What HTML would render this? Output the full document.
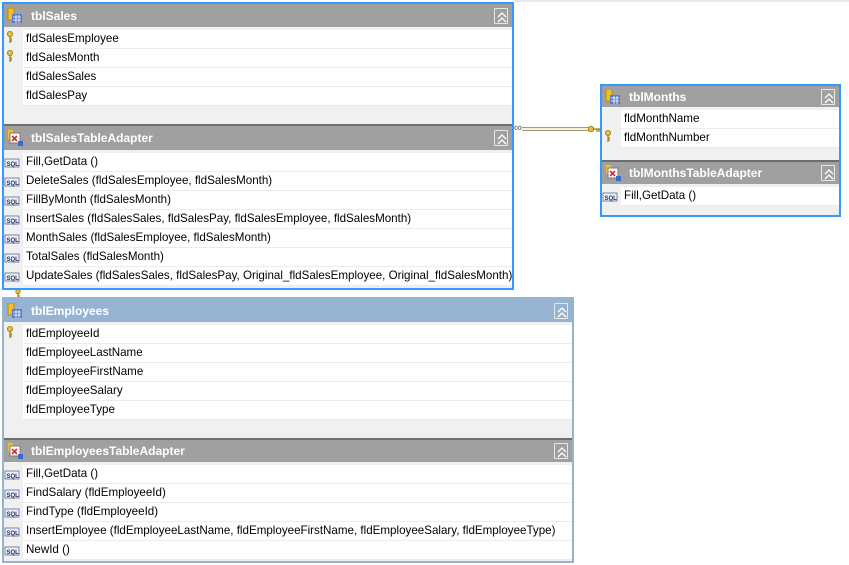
<!DOCTYPE html>
<html><head><meta charset="utf-8"><style>
*{margin:0;padding:0;box-sizing:border-box}
body{width:849px;height:565px;background:#fff;position:relative;overflow:hidden;font-family:"Liberation Sans",Arial,sans-serif;font-size:11.6px;color:#000}
.box{position:absolute;border:2px solid #3399ff;background:#f0f0f0;overflow:hidden}
.box.emp{border-color:#97b3d2}
.hd{position:relative;background:#a0a0a0;color:#fff;font-weight:bold;font-size:12px}
.emp .hd.t{background:#97b3d2}
.hd span{position:absolute;left:27px;top:50%;transform:translateY(-50%)}
.hd svg.ic{position:absolute;left:3px;top:50%;margin-top:-8px}
.btn{position:absolute;right:4px;top:50%;margin-top:-8px;width:14px;height:16px;border:1px solid #e8e8e8;border-radius:1px}
.btn svg{position:absolute;left:2px;top:3px}
.div{height:2px;background:#6e6e6e}
.row{position:relative;height:19px;margin-left:19px;background:#fff;border-bottom:1px solid #ececec;line-height:18px;padding-left:3px;white-space:nowrap}
.row .k{position:absolute;left:-17px;top:1px}
.row .s{position:absolute;left:-19px;top:3px}
.pad{height:3px}
</style></head><body>
<div style="position:absolute;left:514px;top:0;width:335px;height:2px;background:#e6e8ec"></div>

<svg width="0" height="0" style="position:absolute">
<defs>
<g id="tbl"><rect x="1" y="0" width="6" height="12" fill="#f0c020" stroke="#b08010" stroke-width="0.8"/><rect x="5" y="6" width="10" height="9" fill="#5a7ad0"/><path d="M6 9h8M6 12h8M9 7v8M12 7v8" stroke="#fff" stroke-width="0.8"/></g>
<g id="adp"><rect x="1" y="0" width="5" height="9" fill="#f0c020"/><rect x="3" y="3" width="10" height="10" fill="#fff" stroke="#7a7a7a"/><path d="M5 6l5 5M10 6l-5 5" stroke="#d03030" stroke-width="1.6"/><rect x="11" y="11" width="5" height="5" fill="#3a6ad0"/></g>
<g id="key"><circle cx="4" cy="3" r="2.6" fill="#e8c040" stroke="#9a7a10" stroke-width="0.8"/><path d="M4 5v7M4 8h2M4 10h2" stroke="#9a7a10" stroke-width="1.2"/></g>
<g id="sql"><rect x="1" y="3" width="14" height="8" fill="#eef2fa" stroke="#5a6a8a" stroke-width="0.8"/><text x="2.5" y="10" font-size="6" font-family="Liberation Sans" font-weight="bold" fill="#203060">SQL</text></g>
<g id="chev"><path d="M1 5l4-4 4 4M1 10l4-4 4 4" fill="none" stroke="#fff" stroke-width="1.3"/></g>
</defs></svg>

<!-- tblSales -->
<div class="box" style="left:2px;top:2px;width:512px;height:288px">
 <div class="hd t" style="height:23px"><svg class="ic" width="17" height="16"><use href="#tbl"/></svg><span>tblSales</span><div class="btn"><svg width="10" height="11"><use href="#chev"/></svg></div></div>
 <div class="pad"></div>
 <div class="row"><svg class="k" width="8" height="13"><use href="#key"/></svg>fldSalesEmployee</div>
 <div class="row"><svg class="k" width="8" height="13"><use href="#key"/></svg>fldSalesMonth</div>
 <div class="row">fldSalesSales</div>
 <div class="row">fldSalesPay</div>
 <div style="height:18px"></div>
 <div class="div"></div>
 <div class="hd" style="height:24px"><svg class="ic" width="17" height="16"><use href="#adp"/></svg><span>tblSalesTableAdapter</span><div class="btn"><svg width="10" height="11"><use href="#chev"/></svg></div></div>
 <div class="pad"></div>
 <div class="row"><svg class="s" width="16" height="13"><use href="#sql"/></svg>Fill,GetData ()</div>
 <div class="row"><svg class="s" width="16" height="13"><use href="#sql"/></svg>DeleteSales (fldSalesEmployee, fldSalesMonth)</div>
 <div class="row"><svg class="s" width="16" height="13"><use href="#sql"/></svg>FillByMonth (fldSalesMonth)</div>
 <div class="row"><svg class="s" width="16" height="13"><use href="#sql"/></svg>InsertSales (fldSalesSales, fldSalesPay, fldSalesEmployee, fldSalesMonth)</div>
 <div class="row"><svg class="s" width="16" height="13"><use href="#sql"/></svg>MonthSales (fldSalesEmployee, fldSalesMonth)</div>
 <div class="row"><svg class="s" width="16" height="13"><use href="#sql"/></svg>TotalSales (fldSalesMonth)</div>
 <div class="row"><svg class="s" width="16" height="13"><use href="#sql"/></svg>UpdateSales (fldSalesSales, fldSalesPay, Original_fldSalesEmployee, Original_fldSalesMonth)</div>
</div>

<!-- relation -->
<div style="position:absolute;left:522px;top:127px;width:72px;height:4px;border-top:1px solid #a89a70;border-bottom:1px solid #a89a70;background:#f4f0e0"></div>
<div style="position:absolute;left:514px;top:122px;font-size:11px;color:#555">∞</div>
<svg style="position:absolute;left:588px;top:125px" width="12" height="8"><circle cx="3" cy="4" r="2.8" fill="#e8c040" stroke="#9a7a10" stroke-width="0.8"/><path d="M5 4h7M9 4v3M11 4v3" stroke="#9a7a10" stroke-width="1.2"/></svg>
<svg style="position:absolute;left:14px;top:289px" width="8" height="9"><circle cx="4" cy="2.5" r="2.2" fill="#e8c040" stroke="#9a7a10" stroke-width="0.8"/><path d="M4 4v5M4 7h2" stroke="#9a7a10" stroke-width="1.2"/></svg>

<!-- tblMonths -->
<div class="box" style="left:600px;top:84px;width:241px;height:133px">
 <div class="hd t" style="height:21px"><svg class="ic" width="17" height="16"><use href="#tbl"/></svg><span>tblMonths</span><div class="btn"><svg width="10" height="11"><use href="#chev"/></svg></div></div>
 <div class="pad"></div>
 <div class="row">fldMonthName</div>
 <div class="row"><svg class="k" width="8" height="13"><use href="#key"/></svg>fldMonthNumber</div>
 <div style="height:12px"></div>
 <div class="div"></div>
 <div class="hd" style="height:22px"><svg class="ic" width="17" height="16"><use href="#adp"/></svg><span>tblMonthsTableAdapter</span><div class="btn"><svg width="10" height="11"><use href="#chev"/></svg></div></div>
 <div class="pad"></div>
 <div class="row"><svg class="s" width="16" height="13"><use href="#sql"/></svg>Fill,GetData ()</div>
</div>

<!-- tblEmployees -->
<div class="box emp" style="left:2px;top:297px;width:572px;height:266px">
 <div class="hd t" style="height:23px"><svg class="ic" width="17" height="16"><use href="#tbl"/></svg><span>tblEmployees</span><div class="btn"><svg width="10" height="11"><use href="#chev"/></svg></div></div>
 <div class="pad"></div>
 <div class="row"><svg class="k" width="8" height="13"><use href="#key"/></svg>fldEmployeeId</div>
 <div class="row">fldEmployeeLastName</div>
 <div class="row">fldEmployeeFirstName</div>
 <div class="row">fldEmployeeSalary</div>
 <div class="row">fldEmployeeType</div>
 <div style="height:18px"></div>
 <div class="div"></div>
 <div class="hd" style="height:22px"><svg class="ic" width="17" height="16"><use href="#adp"/></svg><span>tblEmployeesTableAdapter</span><div class="btn"><svg width="10" height="11"><use href="#chev"/></svg></div></div>
 <div class="pad"></div>
 <div class="row"><svg class="s" width="16" height="13"><use href="#sql"/></svg>Fill,GetData ()</div>
 <div class="row"><svg class="s" width="16" height="13"><use href="#sql"/></svg>FindSalary (fldEmployeeId)</div>
 <div class="row"><svg class="s" width="16" height="13"><use href="#sql"/></svg>FindType (fldEmployeeId)</div>
 <div class="row"><svg class="s" width="16" height="13"><use href="#sql"/></svg>InsertEmployee (fldEmployeeLastName, fldEmployeeFirstName, fldEmployeeSalary, fldEmployeeType)</div>
 <div class="row"><svg class="s" width="16" height="13"><use href="#sql"/></svg>NewId ()</div>
</div>
</body></html>
